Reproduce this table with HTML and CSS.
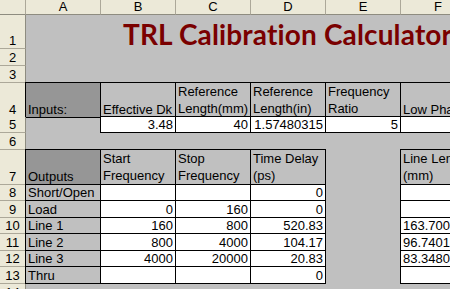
FILE: index.html
```html
<!DOCTYPE html>
<html>
<head>
<meta charset="utf-8">
<link rel="stylesheet" href="styles.css">
</head>
<body>
<div class="sheet">
  <div class="row hdr">
    <div class="corner"></div>
    <div class="ch">A</div><div class="ch">B</div><div class="ch">C</div><div class="ch">D</div><div class="ch">E</div><div class="ch">F</div>
  </div>
  <div class="row h34">
    <div class="rh">1</div><div class="c"></div>
    <div class="c"><span class="title">TRL Calibration Calculator</span></div>
    <div class="c"></div><div class="c"></div><div class="c"></div><div class="c"></div>
  </div>
  <div class="row h17"><div class="rh">2</div></div>
  <div class="row h17"><div class="rh">3</div></div>
  <div class="row h34">
    <div class="rh">4</div>
    <div class="c b d">Inputs:</div>
    <div class="c b g">Effective Dk</div>
    <div class="c b g ml"><span>Reference<br>Length(mm)</span></div>
    <div class="c b g ml"><span>Reference<br>Length(in)</span></div>
    <div class="c b g ml"><span>Frequency<br>Ratio</span></div>
    <div class="c b g">Low Phase</div>
  </div>
  <div class="row h16">
    <div class="rh">5</div>
    <div class="c"></div>
    <div class="c b w r">3.48</div>
    <div class="c b w r">40</div>
    <div class="c b w r">1.57480315</div>
    <div class="c b w r">5</div>
    <div class="c b w"></div>
  </div>
  <div class="row h17"><div class="rh">6</div></div>
  <div class="row h35">
    <div class="rh">7</div>
    <div class="c b d">Outputs</div>
    <div class="c b g ml"><span>Start<br>Frequency</span></div>
    <div class="c b g ml"><span>Stop<br>Frequency</span></div>
    <div class="c b g ml"><span>Time Delay<br>(ps)</span></div>
    <div class="c"></div>
    <div class="c b g ml"><span>Line Length<br>(mm)</span></div>
  </div>
  <div class="row h16">
    <div class="rh">8</div>
    <div class="c b g">Short/Open</div>
    <div class="c b w r"></div>
    <div class="c b w r"></div>
    <div class="c b w r">0</div>
    <div class="c"></div>
    <div class="c b w"></div>
  </div>
  <div class="row h17">
    <div class="rh">9</div>
    <div class="c b g">Load</div>
    <div class="c b w r">0</div>
    <div class="c b w r">160</div>
    <div class="c b w r">0</div>
    <div class="c"></div>
    <div class="c b w"></div>
  </div>
  <div class="row h16">
    <div class="rh">10</div>
    <div class="c b g">Line 1</div>
    <div class="c b w r">160</div>
    <div class="c b w r">800</div>
    <div class="c b w r">520.83</div>
    <div class="c"></div>
    <div class="c b w">163.70024</div>
  </div>
  <div class="row h17">
    <div class="rh">11</div>
    <div class="c b g">Line 2</div>
    <div class="c b w r">800</div>
    <div class="c b w r">4000</div>
    <div class="c b w r">104.17</div>
    <div class="c"></div>
    <div class="c b w">96.740187</div>
  </div>
  <div class="row h16">
    <div class="rh">12</div>
    <div class="c b g">Line 3</div>
    <div class="c b w r">4000</div>
    <div class="c b w r">20000</div>
    <div class="c b w r">20.83</div>
    <div class="c"></div>
    <div class="c b w">83.348023</div>
  </div>
  <div class="row h17">
    <div class="rh">13</div>
    <div class="c b g">Thru</div>
    <div class="c b w r"></div>
    <div class="c b w r"></div>
    <div class="c b w r">0</div>
    <div class="c"></div>
    <div class="c b w"></div>
  </div>
  <div class="row h17"><div class="rh">14</div></div>
</div>
</body>
</html>
```
FILE: styles.css
```css
html, body {
  margin: 0;
  padding: 0;
  width: 450px;
  height: 289px;
  overflow: hidden;
}
body {
  background: #c0c0c0;
  font-family: "Liberation Sans", Arial, sans-serif;
  font-size: 13px;
  color: #000;
}
.sheet {
  width: 476px;
}
.row {
  display: grid;
  grid-template-columns: 26px repeat(6, 75px);
}
.hdr { height: 15px; }
.h16 { height: 16px; }
.h17 { height: 17px; }
.h34 { height: 34px; }
.h35 { height: 35px; }

.corner, .ch, .rh {
  background: #ece9d8;
  border-right: 1px solid #aca899;
  border-bottom: 1px solid #aca899;
  box-sizing: border-box;
}
.ch {
  display: flex;
  align-items: center;
  justify-content: center;
  line-height: 14px;
}
.hdr .corner, .hdr .ch { border-bottom-color: #8e8c80; }
.rh {
  display: flex;
  align-items: flex-end;
  justify-content: center;
  line-height: 15px;
  border-right-color: #8e8c80;
}
.c {
  display: flex;
  align-items: flex-end;
  padding: 0 2px;
  line-height: 15px;
  white-space: nowrap;
  overflow: visible;
  min-width: 0;
}
.b {
  border: 1px solid #000;
  margin: -1px 0 0 -1px;
}
.w { background: #fff; }
.g { background: #c0c0c0; }
.d { background: #969696; }
.r { justify-content: flex-end; }
.ml { line-height: 17px; }
.title {
  font-family: "Lato", "Open Sans", sans-serif;
  font-weight: 700;
  font-size: 28px;
  line-height: 30px;
  letter-spacing: 0.15px;
  font-variant-ligatures: none;
  color: #7a0000;
  margin-left: 20px;
}
```
